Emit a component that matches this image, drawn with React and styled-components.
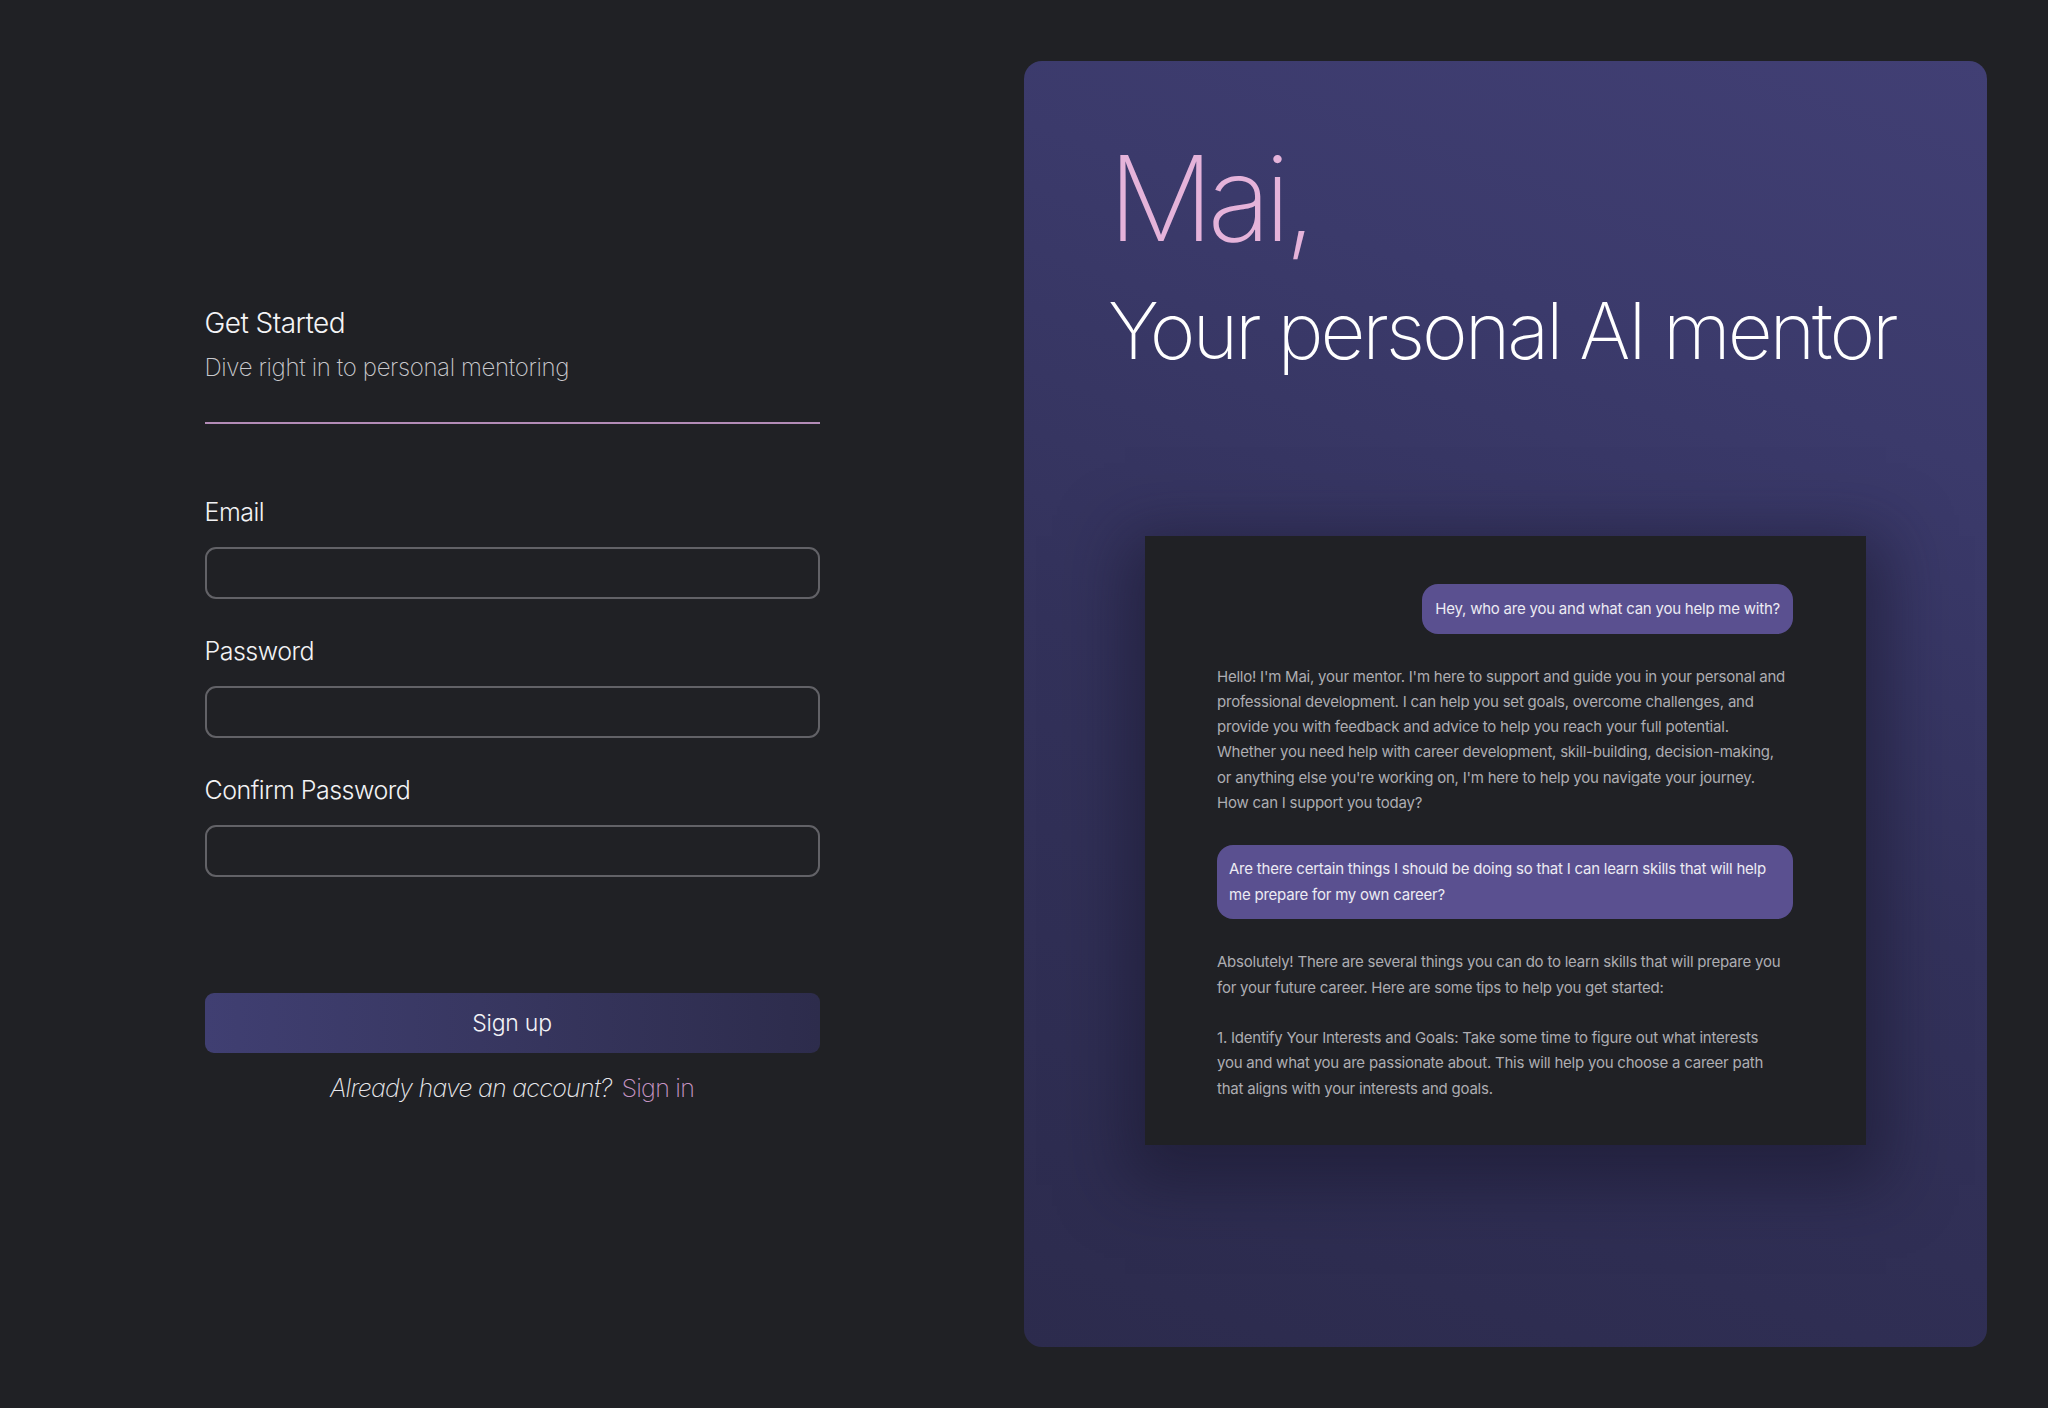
import styled, { createGlobalStyle } from "styled-components";

const GlobalStyle = createGlobalStyle`
  html, body {
    margin: 0;
    padding: 0;
    background: #202125;
  }
  body {
    font-family: Inter, "Noto Sans", sans-serif;
    color: #ffffff;
  }
`;

// page
const Page = styled.div`
  display: grid;
  grid-template-columns: 1024px 1fr;
  width: 2048px;
  height: 1408px;
  background: #202125;
`;

const LeftSide = styled.div`
  display: flex;
  align-items: center;
  justify-content: center;
`;

const Form = styled.form`
  width: 615px;
  display: flex;
  flex-direction: column;
`;

const Title = styled.h1`
  margin: 0;
  font-size: 28px;
  font-weight: 300;
  letter-spacing: -0.02em;
  color: #f4f4f6;
  line-height: 36px;
`;

const Subtitle = styled.p`
  margin: 11px 0 0;
  font-size: 24px;
  font-weight: 200;
  letter-spacing: -0.015em;
  color: #c9c9cd;
  line-height: 32px;
`;

const Divider = styled.hr`
  margin: 38px 0 72px;
  border: none;
  height: 2px;
  background: #b38cb7;
`;

const Field = styled.div`
  display: flex;
  flex-direction: column;
  gap: 19px;
  margin-bottom: 36px;
`;

const Label = styled.label`
  font-size: 25px;
  font-weight: 300;
  letter-spacing: -0.02em;
  color: #f2f2f4;
  line-height: 32px;
`;

const Input = styled.input`
  box-sizing: border-box;
  width: 100%;
  height: 52px;
  background: transparent;
  border: 2px solid #626267;
  border-radius: 11px;
  outline: none;
  color: #fff;
  padding: 0 16px;
  font-size: 20px;
  font-family: inherit;
`;

const SubmitButton = styled.button`
  margin-top: 80px;
  height: 60px;
  border: none;
  border-radius: 9px;
  background: linear-gradient(90deg, #403f72 0%, #37365f 50%, #2d2c4c 100%);
  color: #f2f2f6;
  font-family: inherit;
  font-size: 23px;
  font-weight: 300;
  letter-spacing: -0.01em;
`;

const SwitchLine = styled.p`
  margin: 20px 0 0;
  text-align: center;
  font-size: 25px;
  font-weight: 200;
  letter-spacing: -0.03em;
  color: #e8e8ec;
`;

const Italic = styled.span`
  font-style: italic;
`;

const SignInLink = styled.a`
  color: #c594c3;
  margin-left: 10px;
  text-decoration: none;
`;

// right panel
const RightSide = styled.div`
  padding: 61px 61px 61px 0;
  display: flex;
`;

const Panel = styled.section`
  flex: 1;
  border-radius: 18px;
  background: linear-gradient(20deg, #2c2b4d 0%, #33325b 45%, #3b3a6b 75%, #413f74 100%);
  padding: 62px 0 0 84px;
  display: flex;
  flex-direction: column;
`;

const Name = styled.h2`
  margin: 0;
  font-size: 118px;
  font-weight: 200;
  letter-spacing: -0.055em;
  line-height: 150px;
  color: #e5b3da;
`;

const Tagline = styled.h3`
  margin: 8px 0 0;
  font-size: 78px;
  font-weight: 200;
  letter-spacing: -0.04em;
  line-height: 100px;
  color: #ffffff;
`;

const ChatBox = styled.div`
  align-self: center;
  margin: 155px 84px 0 0;
  width: 721px;
  height: 609px;
  box-sizing: border-box;
  background: #202125;
  padding: 48px 73px 0 72px;
  display: flex;
  flex-direction: column;
  box-shadow: 0 20px 60px 20px rgba(24, 22, 44, 0.55);
`;

const Bubble = styled.div`
  align-self: ${(p) => (p.$wide ? "stretch" : "flex-end")};
  background: #5a5090;
  color: #ecebf3;
  border-radius: 16px;
  padding: ${(p) => (p.$wide ? "11px 12px 12px" : "12px 13px")};
  font-size: 15px;
  line-height: 25.5px;
  letter-spacing: -0.015em;
  margin-bottom: 30px;
`;

const Reply = styled.p`
  margin: 0 0 30px;
  color: #adadb2;
  font-size: 15px;
  line-height: 25.3px;
  letter-spacing: -0.015em;
  white-space: nowrap;
`;

function App() {
  return (
    <>
      <GlobalStyle />
      <Page>
        <LeftSide>
          <Form onSubmit={(e) => e.preventDefault()}>
            <Title>Get Started</Title>
            <Subtitle>Dive right in to personal mentoring</Subtitle>
            <Divider />
            <Field>
              <Label>Email</Label>
              <Input type="email" />
            </Field>
            <Field>
              <Label>Password</Label>
              <Input type="password" />
            </Field>
            <Field>
              <Label>Confirm Password</Label>
              <Input type="password" />
            </Field>
            <SubmitButton type="submit">Sign up</SubmitButton>
            <SwitchLine>
              <Italic>Already have an account?</Italic>
              <SignInLink href="#">Sign in</SignInLink>
            </SwitchLine>
          </Form>
        </LeftSide>

        <RightSide>
          <Panel>
            <Name>Mai,</Name>
            <Tagline>Your personal AI mentor</Tagline>
            <ChatBox>
              <Bubble>Hey, who are you and what can you help me with?</Bubble>
              <Reply>
                Hello! I'm Mai, your mentor. I'm here to support and guide you in your personal and<br />
                professional development. I can help you set goals, overcome challenges, and<br />
                provide you with feedback and advice to help you reach your full potential.<br />
                Whether you need help with career development, skill-building, decision-making,<br />
                or anything else you're working on, I'm here to help you navigate your journey.<br />
                How can I support you today?
              </Reply>
              <Bubble $wide>
                Are there certain things I should be doing so that I can learn skills that will help<br />
                me prepare for my own career?
              </Bubble>
              <Reply>
                Absolutely! There are several things you can do to learn skills that will prepare you<br />
                for your future career. Here are some tips to help you get started:<br />
                <br />
                1. Identify Your Interests and Goals: Take some time to figure out what interests<br />
                you and what you are passionate about. This will help you choose a career path<br />
                that aligns with your interests and goals.
              </Reply>
            </ChatBox>
          </Panel>
        </RightSide>
      </Page>
    </>
  );
}

export default App;
